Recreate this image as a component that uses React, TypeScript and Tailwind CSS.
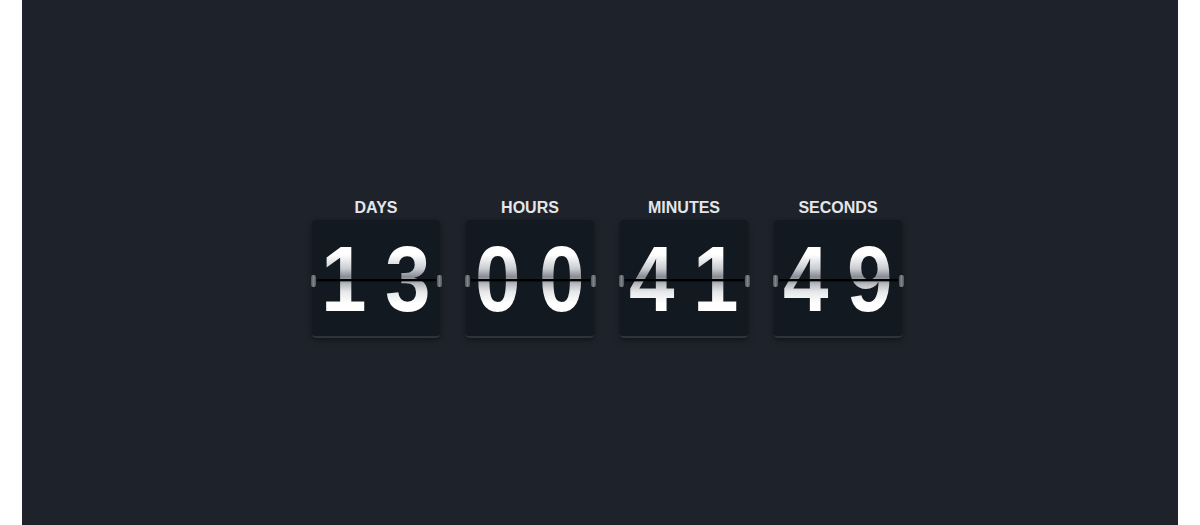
import React from 'react';

type Unit = { label: string; value: string };

const units: Unit[] = [
  { label: 'DAYS', value: '13' },
  { label: 'HOURS', value: '00' },
  { label: 'MINUTES', value: '41' },
  { label: 'SECONDS', value: '49' },
];

const FlipCard: React.FC<Unit> = ({ label, value }) => {
  return (
    <div className="flex flex-col items-center">
      <span className="mb-[3px] text-[16px] leading-[18px] font-bold text-[#e4e6ea]">{label}</span>
      <div className="relative h-[118px] w-[128px] rounded-[4px] border-b-2 border-[#2d323b] bg-[#131920] shadow-[0_2px_6px_rgba(0,0,0,0.45)]">
        {/* digits */}
        <div className="flex h-[116px] w-full">
          {value.split('').map((d, i) => (
            <div key={i} className="flex h-full w-1/2 justify-center">
              <span className="block h-[116px] scale-x-[0.88] bg-[linear-gradient(to_bottom,#ffffff_0%,#ffffff_30%,#c9ccd1_42%,#868b92_49%,#a0a4aa_52%,#e6e8ea_62%,#ffffff_72%,#ffffff_100%)] bg-clip-text text-[93px] leading-[118px] font-bold text-transparent">
                {d}
              </span>
            </div>
          ))}
        </div>
        {/* split line */}
        <div className="absolute top-[59px] right-[4px] left-[5px] h-[2px] bg-black shadow-[0_1px_1px_rgba(0,0,0,0.4)]" />
        {/* hinges */}
        <div className="absolute top-[55px] left-[-1px] h-[12px] w-[5px] rounded-[2px] bg-[linear-gradient(to_right,#4f545b,#80858c,#4f545b)]" />
        <div className="absolute top-[55px] right-[-2px] h-[12px] w-[5px] rounded-[2px] bg-[linear-gradient(to_right,#4f545b,#80858c,#4f545b)]" />
      </div>
    </div>
  );
};

export default function App() {
  return (
    <div className="h-[525px] w-full bg-white px-[22px] font-['Liberation_Sans',Arial,sans-serif]">
      <div className="flex h-full items-center justify-center bg-[#1e232b] pt-[12px] pl-[14px]">
        <div className="flex gap-[26px]">
          {units.map(u => (
            <FlipCard key={u.label} {...u} />
          ))}
        </div>
      </div>
    </div>
  );
}
